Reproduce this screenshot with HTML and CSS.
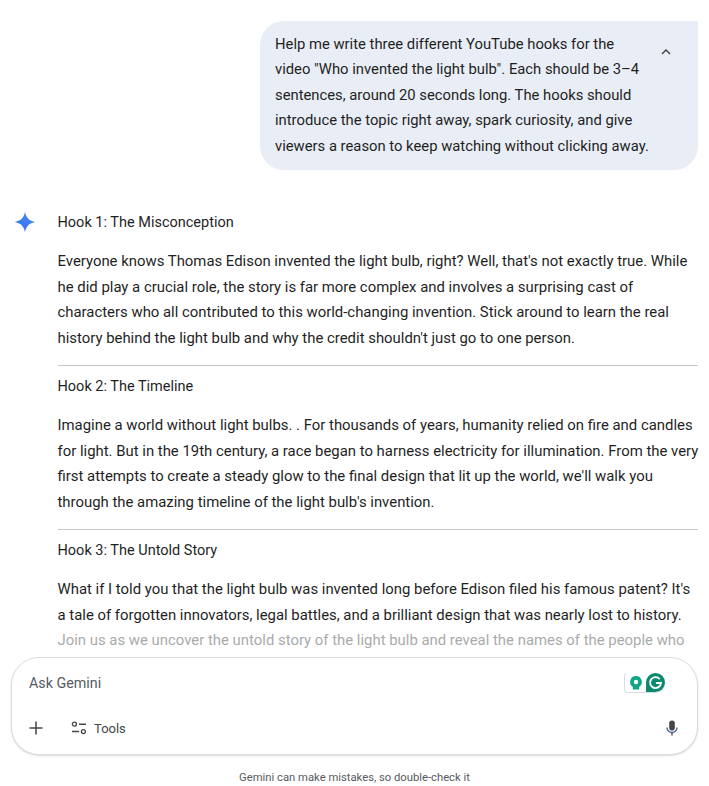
FILE: index.html
```html
<!DOCTYPE html>
<html lang="en">
<head>
    <meta charset="UTF-8">
    <meta name="viewport" content="width=device-width, initial-scale=1.0">
    <title>Gemini</title>
    <link rel="stylesheet" href="styles.css">
</head>
<body>

<div class="app">
    <div class="chat">
        <div class="user-row">
            <div class="bubble">
                <div class="bubble-text">
                    <div>Help me write three different YouTube hooks for the</div>
                    <div>video "Who invented the light bulb". Each should be 3–4</div>
                    <div>sentences, around 20 seconds long. The hooks should</div>
                    <div>introduce the topic right away, spark curiosity, and give</div>
                    <div>viewers a reason to keep watching without clicking away.</div>
                </div>
                <svg class="chevron" viewBox="0 0 10 6" width="10" height="6">
                    <path d="M1 5 L5 1 L9 5" fill="none" stroke="#444746" stroke-width="1.5"/>
                </svg>
            </div>
        </div>

        <div class="answer">
            <svg class="spark" viewBox="0 0 24 24" width="24" height="24">
                <defs>
                    <linearGradient id="sparkFill" x1="0" y1="1" x2="1" y2="0">
                        <stop offset="0" stop-color="#2f6fe8"/>
                        <stop offset="1" stop-color="#4a90f5"/>
                    </linearGradient>
                </defs>
                <path d="M12 1.5 C12.8 7.5 16.5 11.2 22.5 12 C16.5 12.8 12.8 16.5 12 22.5 C11.2 16.5 7.5 12.8 1.5 12 C7.5 11.2 11.2 7.5 12 1.5 Z" fill="url(#sparkFill)"/>
            </svg>
            <div class="answer-body">
                <div class="hook-title">Hook 1: The Misconception</div>
                <div class="hook-text">
                    <div>Everyone knows Thomas Edison invented the light bulb, right? Well, that's not exactly true. While</div>
                    <div>he did play a crucial role, the story is far more complex and involves a surprising cast of</div>
                    <div>characters who all contributed to this world-changing invention. Stick around to learn the real</div>
                    <div>history behind the light bulb and why the credit shouldn't just go to one person.</div>
                </div>
                <hr class="divider">
                <div class="hook-title">Hook 2: The Timeline</div>
                <div class="hook-text">
                    <div>Imagine a world without light bulbs. . For thousands of years, humanity relied on fire and candles</div>
                    <div>for light. But in the 19th century, a race began to harness electricity for illumination. From the very</div>
                    <div>first attempts to create a steady glow to the final design that lit up the world, we'll walk you</div>
                    <div>through the amazing timeline of the light bulb's invention.</div>
                </div>
                <hr class="divider">
                <div class="hook-title">Hook 3: The Untold Story</div>
                <div class="hook-text">
                    <div>What if I told you that the light bulb was invented long before Edison filed his famous patent? It's</div>
                    <div>a tale of forgotten innovators, legal battles, and a brilliant design that was nearly lost to history.</div>
                    <div class="faded">Join us as we uncover the untold story of the light bulb and reveal the names of the people who</div>
                </div>
            </div>
        </div>
    </div>

    <div class="composer">
        <div class="composer-top">
            <span class="placeholder">Ask Gemini</span>
            <div class="grammarly">
                <svg viewBox="0 0 14 16" width="14" height="16">
                    <path d="M7 1 A6 6 0 0 1 10.2 12 V14.5 H3.8 V12 A6 6 0 0 1 7 1 Z" fill="#12a58a"/>
                    <circle cx="7" cy="7" r="2.2" fill="#fff"/>
                </svg>
                <svg viewBox="0 0 16 16" width="19" height="19">
                    <path d="M8 0 A8 8 0 0 1 8 16 H0 V8 A8 8 0 0 1 8 0 Z" fill="#0b8a6f"/>
                    <path d="M11.6 5.2 A4.6 4.6 0 1 0 12.6 8.4 H8.4" fill="none" stroke="#fff" stroke-width="1.6"/>
                </svg>
            </div>
        </div>
        <div class="composer-bottom">
            <svg class="plus" viewBox="0 0 14 14" width="14" height="14">
                <path d="M7 0.5 V13.5 M0.5 7 H13.5" stroke="#444746" stroke-width="1.5"/>
            </svg>
            <svg class="tools-icon" viewBox="0 0 16 14" width="16" height="14">
                <circle cx="3.4" cy="3.2" r="2" fill="none" stroke="#444746" stroke-width="1.3"/>
                <path d="M8 3.2 H15 M1 10.6 H8" stroke="#444746" stroke-width="1.5"/>
                <circle cx="12.4" cy="10.6" r="2" fill="none" stroke="#444746" stroke-width="1.3"/>
            </svg>
            <span class="tools-label">Tools</span>
            <svg class="mic" viewBox="0 0 12 16" width="12" height="16">
                <rect x="3.2" y="0.5" width="5.6" height="10" rx="2.8" fill="#444746"/>
                <path d="M1 7.4 A5 5 0 0 0 11 7.4" fill="none" stroke="#4b6a94" stroke-width="1.4"/>
                <path d="M6 12.4 V15.5" stroke="#444746" stroke-width="1.4"/>
            </svg>
        </div>
    </div>

    <div class="footer">Gemini can make mistakes, so double-check it</div>
</div>

</body>
</html>
```

FILE: styles.css
```css
html, body {
    margin: 0;
    height: 100%;
    overflow: hidden;
    background-color: #fff;
}
body {
    font-family: Roboto, "Noto Sans", sans-serif;
    color: #1f1f1f;
}
.app {
    display: flex;
    flex-direction: column;
    height: 786px;
}
.chat {
    flex: 1;
    min-height: 0;
    overflow: hidden;
    padding: 21px 11px 0 13px;
}
.user-row {
    display: flex;
    justify-content: flex-end;
}
.bubble {
    display: flex;
    width: 438px;
    height: 149px;
    box-sizing: border-box;
    padding: 11px 27px 0 15px;
    background-color: #e9eef6;
    border-radius: 24px 0 24px 24px;
    justify-content: space-between;
}
.bubble-text {
    font-size: 14.8px;
    line-height: 25.4px;
    white-space: nowrap;
}
.chevron {
    margin-top: 17px;
}
.answer {
    display: flex;
    margin-top: 40px;
    gap: 20.5px;
}
.spark {
    flex: none;
}
.answer-body {
    flex: 1;
    min-width: 0;
}
.hook-title {
    font-size: 14.5px;
    line-height: 25px;
}
.hook-text {
    margin-top: 14px;
    font-size: 14.9px;
    line-height: 25.5px;
    white-space: nowrap;
}
.faded {
    color: #a9abab;
}
.divider {
    margin: 14px 0 8px;
    border: none;
    border-top: 1px solid #c7c7c7;
}
.composer {
    flex: none;
    height: 98px;
    margin: 0 11px;
    box-sizing: border-box;
    padding: 13px 16px 0 17px;
    background-color: #fff;
    border: 1px solid #dcdcdc;
    border-radius: 28px;
    box-shadow: 0 1px 2px rgba(0, 0, 0, 0.15);
}
.composer-top {
    display: flex;
    justify-content: space-between;
    align-items: center;
    height: 24px;
}
.placeholder {
    font-size: 14.3px;
    color: #575b5f;
}
.grammarly {
    display: flex;
    align-items: center;
    gap: 3px;
    margin-right: 16px;
    padding: 0 0 0 4px;
    background-color: #fff;
    border-left: 1px solid #d5dde6;
    border-bottom: 1px solid #d5dde6;
    border-radius: 4px 10px 10px 4px;
}
.composer-bottom {
    display: flex;
    align-items: center;
    height: 24px;
    margin-top: 21px;
}
.tools-icon {
    margin-left: 28px;
}
.tools-label {
    margin-left: 7px;
    font-size: 13px;
    color: #444746;
}
.mic {
    margin-left: auto;
    margin-right: 3px;
}
.footer {
    flex: none;
    height: 31px;
    line-height: 45px;
    text-align: center;
    font-size: 11.25px;
    color: #575b5f;
}
```
